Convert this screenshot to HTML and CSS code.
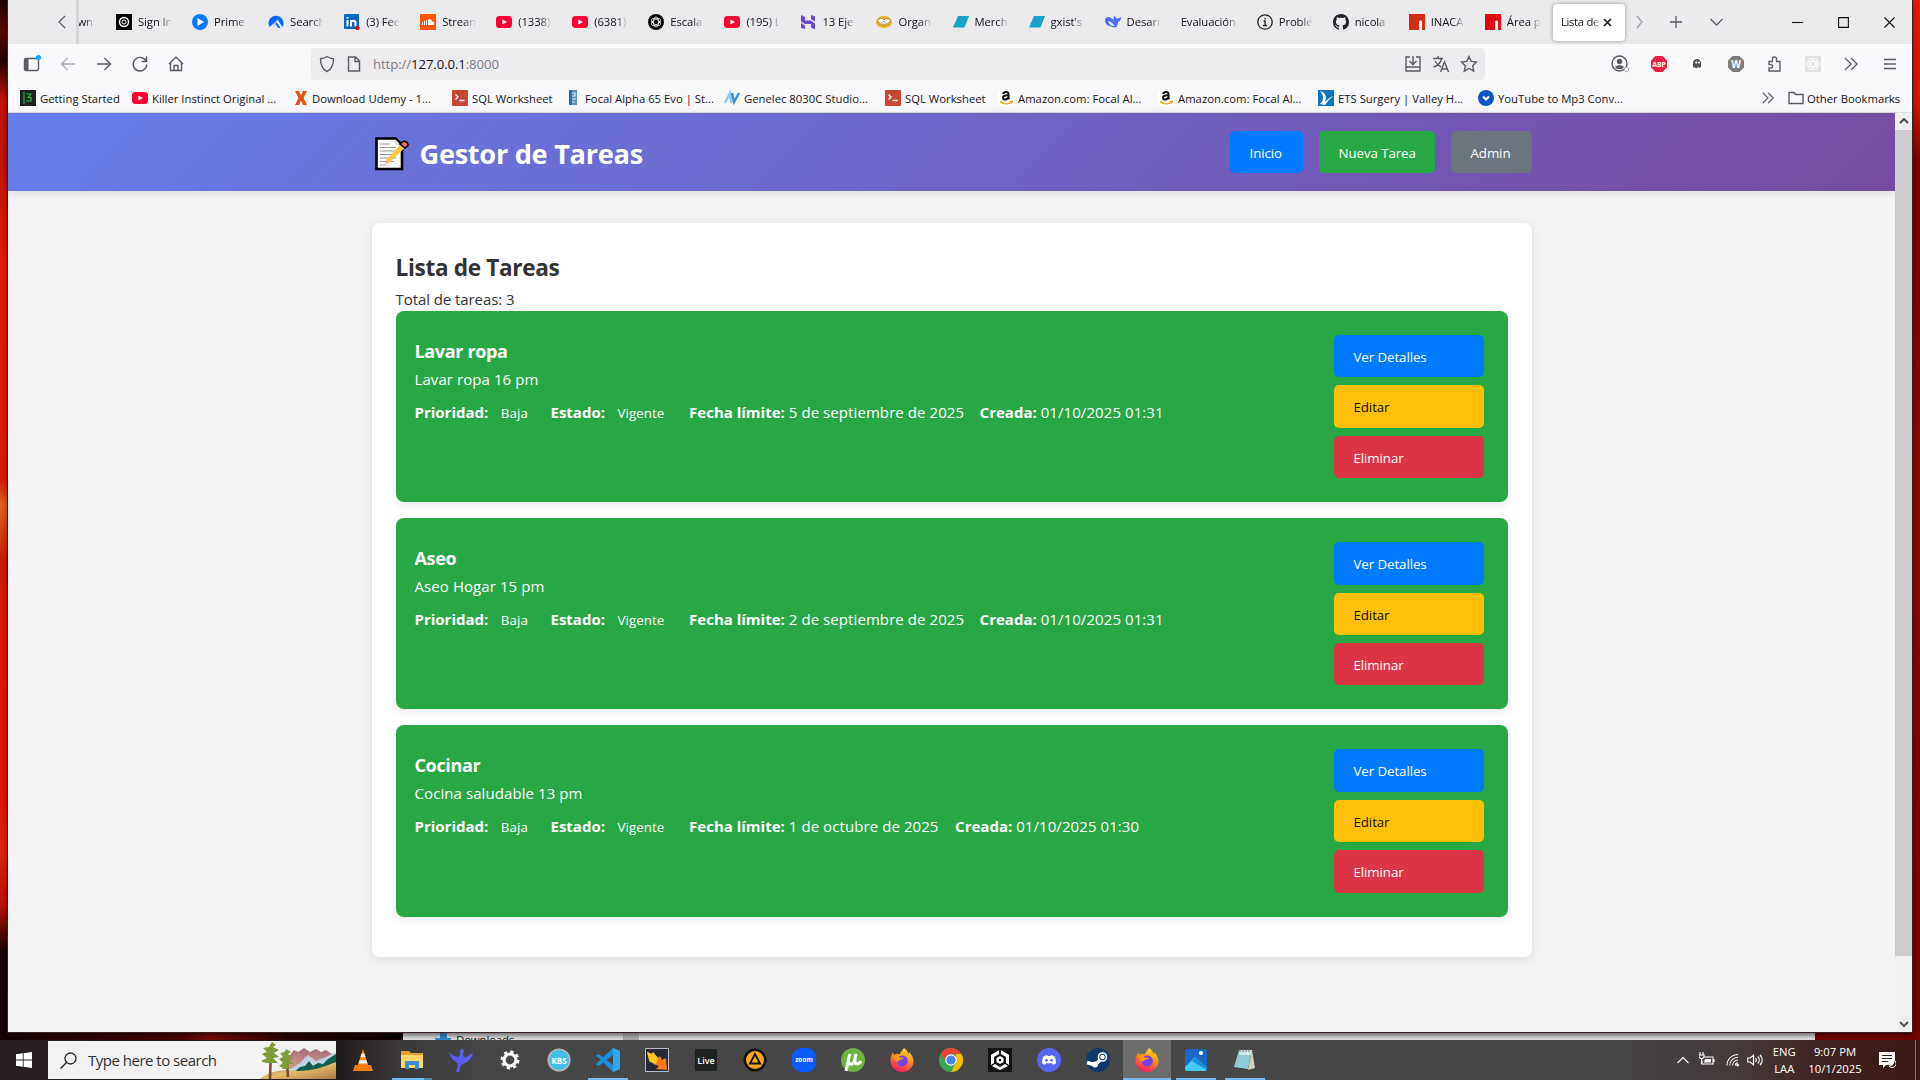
FILE: index.html
```html
<!DOCTYPE html>
<html lang="es">
<head>
<meta charset="utf-8">
<title>Lista de Tareas</title>
<link rel="stylesheet" href="styles.css">
</head>
<body>
<svg class="sprite" aria-hidden="true">
  <defs>
    <linearGradient id="flame" x1="0.7" y1="0" x2="0.3" y2="1"><stop offset="0" stop-color="#ffe226"/><stop offset=".45" stop-color="#ff8a1c"/><stop offset="1" stop-color="#f5156c"/></linearGradient>
    <linearGradient id="hill" x1="0" y1="0" x2="1" y2="1"><stop offset="0" stop-color="#8a6a4a"/><stop offset=".5" stop-color="#e2bd6c"/><stop offset="1" stop-color="#a8783f"/></linearGradient>
    <linearGradient id="peak" x1="0" y1="0" x2="0" y2="1"><stop offset="0" stop-color="#a06a78"/><stop offset="1" stop-color="#d9a090"/></linearGradient>
    <symbol id="youtube" viewBox="0 0 16 16"><rect y="2" width="16" height="12" rx="3.4" fill="#ff0033"/><path d="M6.3 5.4v5.2L11 8z" fill="#fff"/></symbol>
    <symbol id="sql" viewBox="0 0 16 16"><rect width="16" height="16" rx="1" fill="#c74634"/><path d="M3.5 4.5 6 7 3.500 9.500M7.500 10.500h5" stroke="#fff" stroke-width="1.300" fill="none"/></symbol>
    <symbol id="amazon" viewBox="0 0 16 16"><rect width="16" height="16" rx="3" fill="#fff"/><path d="M5.200 4.200C5.500 1.300 10.400 1.100 10.500 4v4l.9 1.200M10.200 5.200C6.500 5 4.800 6.200 5 8c.3 2.400 4.500 2 5.300-.8" fill="none" stroke="#111" stroke-width="2"/><path d="M2 11.500c3.700 3 8.300 3 11.300.7M11.600 11.400h2.600l-.7 2.200" fill="none" stroke="#f90" stroke-width="1.400"/></symbol>
    <symbol id="slant" viewBox="0 0 16 16"><path d="M5 2h11l-4.500 11.500H0z" fill="#17a2c6"/></symbol>
    <symbol id="firefox" viewBox="0 0 24 24"><path d="M14 0c3 2 4 4 4.200 6C19 5.500 19 4.500 19 4c3 3 4.600 6 4.500 9.500C23.300 19.600 18.500 24 12.300 24 5.700 24 .6 19.300.5 13 .4 9.500 1.500 6.500 3 4.500L4.500 7C6 5 8 5.500 9.500 6.500 10 5 12 3 14 0z" fill="url(#flame)"/><circle cx="12.300" cy="13" r="5.500" fill="#7542e5"/><path d="M3.500 8c3-1 5 0 6.500 2 2-1 3.500-.3 4 1-3-.3-4 .8-5.500 2C6 15 4 11 3.500 8z" fill="#ff9a20"/></symbol>
    <symbol id="dbl" viewBox="0 0 16 16"><path d="m2 2 6 6-6 6M8 2l6 6-6 6" fill="none" stroke="#5b5b66" stroke-width="1.300"/></symbol>
    <symbol id="inacap" viewBox="0 0 16 16"><path d="M0 0h16v16H0z" fill="currentColor"/><path d="M10 7c1.500-1 3-.5 3 1v8h-3z" fill="#fff"/></symbol>
  </defs>
</svg>
<div class="desktop">
  <div class="explorer">
    <svg width="18" height="10" viewBox="0 0 18 10"><path d="M6 0h7v6h5l-9 9-9-9h6z" fill="#2f86cf"/></svg>
    <span>Downloads</span><i class="explorer-bar"></i>
  </div>
  <div class="window">
    <div class="tabstrip">
      <div class="tab-scroll"><svg width="8" height="14" viewBox="0 0 8 14"><path d="M7 1 1 7l6 6" class="line"/></svg></div>
      <div class="tab-cut"><span>ownl</span></div>
      <div class="tab"><svg class="fav" viewBox="0 0 16 16"><path d="M0 0h16v16H0z"/><circle cx="8" cy="8" r="4.500" fill="none" stroke="#fff" stroke-width="1.500"/><circle cx="8" cy="8" r="2" fill="none" stroke="#fff"/></svg><span>Sign In</span></div>
      <div class="tab"><svg class="fav" viewBox="0 0 16 16"><circle cx="8" cy="8" r="8" fill="#0779ff"/><path d="M5.500 4v8L12 8z" fill="#fff"/></svg><span>Prime</span></div>
      <div class="tab"><svg class="fav" viewBox="0 0 16 16"><path d="M1.500 13A7.500 7.500 0 1 1 14.500 13L9.500 5.500 7.500 8z" fill="#0b66ff"/><path d="m8.500 8 4 6H10L7.500 10 5 13z" fill="#0b66ff"/></svg><span>Search</span></div>
      <div class="tab"><svg class="fav" viewBox="0 0 16 16"><rect width="15" height="15" rx="1" fill="#0a66c2"/><path d="M3.500 6v6.500M3.500 3v1.500M7 6v6.500M7 9c0-3 4.500-3 4.500 0v3.500" stroke="#fff" stroke-width="2" fill="none"/><circle cx="13.500" cy="14" r="2.200" fill="#d11124"/></svg><span>(3) Fee</span></div>
      <div class="tab"><svg class="fav" viewBox="0 0 16 16"><rect width="16" height="16" fill="#ff5500"/><path d="M2.500 8v3M4.500 7v4M6.500 6v5" stroke="#fff"/><path d="M8 5.500c2-1 4 .4 4 2 3-.5 3 3.500.5 3.500H8z" fill="#fff"/></svg><span>Stream</span></div>
      <div class="tab"><svg class="fav"><use href="#youtube"/></svg><span>(1338)</span></div>
      <div class="tab"><svg class="fav"><use href="#youtube"/></svg><span>(6381)</span></div>
      <div class="tab"><svg class="fav" viewBox="0 0 16 16"><circle cx="8" cy="8" r="8"/><g fill="none" stroke="#fff" stroke-width=".8"><ellipse cx="8" cy="8" rx="2.700" ry="5"/><ellipse cx="8" cy="8" rx="2.700" ry="5" transform="rotate(60 8 8)"/><ellipse cx="8" cy="8" rx="2.700" ry="5" transform="rotate(120 8 8)"/></g></svg><span>Escala</span></div>
      <div class="tab"><svg class="fav"><use href="#youtube"/></svg><span>(195) L</span></div>
      <div class="tab"><svg class="fav" viewBox="0 0 16 16"><path d="M1 1l4 2v3.500h6l4 3v6l-4-2V10H5L1 7.500zM11 1l4 1.500v5L11 5zM1 9l4 2.500V15l-4-1z" fill="#6a47d6"/></svg><span>13 Eje</span></div>
      <div class="tab"><svg class="fav" viewBox="0 0 16 16"><ellipse cx="8" cy="8" rx="8" ry="6" fill="#e5b51e"/><path d="M1 7c3-4 5-3 7-1 2-2 4-3 7 1l-5 4H6z" fill="#fff" stroke="#9a7714" stroke-width=".8"/><path d="m5 8 4 3m-2-4 4 3" stroke="#9a7714" stroke-width=".7"/></svg><span>Organ</span></div>
      <div class="tab"><svg class="fav"><use href="#slant"/></svg><span>Merch</span></div>
      <div class="tab"><svg class="fav"><use href="#slant"/></svg><span>gxist's</span></div>
      <div class="tab"><svg class="fav" viewBox="0 0 16 16"><path d="M0 6c0-3 4-4 6-2l3 2c-1-2 0-4 1-4l1 2c2 1 3 0 5-1 0 3-1 4-3 5 0 3-2 4-1 5-3 1-5 0-7-1C2 12 0 9 0 6z" fill="#4d6bfe"/><path d="M3 7c3 0 5 3 7 5-3 .5-6-1-7-5z" fill="#eaeaec"/></svg><span>Desarr</span></div>
      <div class="tab"><span class="wide">Evaluación</span></div>
      <div class="tab"><svg class="fav" viewBox="0 0 16 16"><circle cx="8" cy="8" r="7.200" class="dark"/><path d="M6.500 7H8v4.500M6 11.500h4M8 4v1.500" class="dark"/></svg><span>Proble</span></div>
      <div class="tab"><svg class="fav" viewBox="0 0 16 16"><path fill="#1f2328" d="M8 0c4.420 0 8 3.580 8 8a8.010 8.010 0 0 1-5.450 7.590c-.4.080-.55-.170-.55-.380 0-.270.010-1.130.010-2.200 0-.750-.250-1.230-.540-1.480 1.780-.200 3.650-.880 3.650-3.950 0-.880-.310-1.590-.820-2.150.080-.200.360-1.020-.080-2.120 0 0-.670-.220-2.200.820-.640-.180-1.320-.270-2-.270s-1.360.090-2 .270c-1.530-1.030-2.200-.820-2.200-.820-.440 1.100-.160 1.920-.080 2.120-.510.560-.820 1.280-.820 2.150 0 3.060 1.860 3.750 3.640 3.950-.230.200-.440.550-.510 1.070-.460.210-1.610.550-2.330-.660-.150-.240-.600-.830-1.230-.820-.670.010-.270.380.010.530.340.190.730.900.820 1.130.160.450.680 1.310 2.690.940 0 .670.010 1.300.010 1.490 0 .210-.150.450-.550.380A7.995 7.995 0 0 1 0 8c0-4.420 3.580-8 8-8Z"/></svg><span>nicola</span></div>
      <div class="tab"><svg class="fav orange"><use href="#inacap"/></svg><span>INACA</span></div>
      <div class="tab"><svg class="fav red"><use href="#inacap"/></svg><span>Área p</span></div>
      <div class="tab active"><span>Lista de</span><svg width="9" height="9" viewBox="0 0 9 9"><path d="m1 1 7 7m0-7L1 8" stroke="#15141a" stroke-width="1.600"/></svg></div>
      <div class="strip-tools">
        <svg width="7" height="14" viewBox="0 0 7 14" opacity=".5"><path d="m1 1 5 6-5 6" class="line"/></svg>
        <svg width="12" height="12" viewBox="0 0 12 12"><path d="M6 0v12M0 6h12" class="line"/></svg>
        <svg width="13" height="8" viewBox="0 0 13 8"><path d="m.5 1 6 6 6-6" class="line"/></svg>
      </div>
      <div class="win-buttons">
        <svg viewBox="0 0 11 11"><path d="M0 5.500h11" class="win"/></svg>
        <svg viewBox="0 0 11 11"><path d="M.6.6h9.800v9.800H.6z" class="win"/></svg>
        <svg viewBox="0 0 11 11"><path d="m.5.5 10 10m0-10-10 10" class="win"/></svg>
      </div>
    </div>

    <div class="navbar">
      <div class="nav-left">
        <svg viewBox="0 0 18 18"><rect x="1.500" y="3.500" width="14" height="12" rx="1.500" class="ico"/><path d="M2 4h3.500v11H2z" fill="#5b5b66"/><circle cx="15.500" cy="2.500" r="2.500" fill="#00aeff"/></svg>
        <svg viewBox="0 0 18 18" opacity=".45"><path d="M16 9H2.500M8.500 3 2.500 9l6 6" class="ico"/></svg>
        <svg viewBox="0 0 18 18"><path d="M2 9h13.500M9.500 3l6 6-6 6" class="ico"/></svg>
        <svg viewBox="0 0 18 18"><path d="M15 6A6.800 6.800 0 1 0 15.800 9.500M15.500 1.500V6.500H10.500" class="ico"/></svg>
        <svg viewBox="0 0 18 18"><path d="M2 9 9 2l7 7M3.500 8v7.500h11V8M7 15.500v-5h4v5" class="ico"/></svg>
      </div>
      <div class="urlbar">
        <svg viewBox="0 0 18 18"><path d="M9 1.500c2 1.500 4 2 6.500 2.200 0 6-1.500 10.300-6.500 12.800C4 14 2.500 9.700 2.500 3.700 5 3.500 7 3 9 1.500z" class="ico"/></svg>
        <svg viewBox="0 0 18 18"><path d="M3.500 2h7l4 4v10h-11zM10 2v4.500h4.500" class="ico"/></svg>
        <span class="url"><i>http://</i>127.0.0.1<i>:8000</i></span>
        <div class="url-actions">
          <svg viewBox="0 0 18 18"><path d="M6 2H2v10h14V2h-4M2 12v4h14v-4M9 1v8M5.500 6 9 9.500 12.500 6" class="ico"/></svg>
          <svg viewBox="0 0 18 18"><path d="M1 3.500h10M6 1v2.500M9.500 4C8.500 8 5 11 1.500 12M3 6c1.500 3 3 4.500 6 6M8.500 17l4-10 4 10M10 14h5" class="ico"/></svg>
          <svg viewBox="0 0 18 18"><path d="m9 1.500 2.300 4.900 5.200.7-3.800 3.700 1 5.300L9 13.500l-4.700 2.600 1-5.300L1.500 7.100l5.200-.7z" class="ico"/></svg>
        </div>
      </div>
      <div class="nav-right">
        <svg viewBox="0 0 18 18"><circle cx="8.500" cy="8.500" r="7.500" class="ico"/><circle cx="8.500" cy="6.500" r="2.700" fill="#5b5b66"/><path d="M4 12c2-2.500 7-2.500 9 0l-2 2H6z" fill="#5b5b66"/><circle cx="15.500" cy="14.500" r="2.200" fill="#f9f9fb" stroke="#aaa"/></svg>
        <svg viewBox="0 0 18 18"><path d="M5.500 1h7L17 5.500v7L12.500 17h-7L1 12.500v-7z" fill="#ed1e45"/><text x="9" y="11.800" class="abp">ABP</text></svg>
        <svg viewBox="0 0 18 18"><circle cx="9" cy="9" r="7" fill="#fff"/><path d="M5 12.500V8c0-5.500 8-5.500 8 0v4l-1.500 1-1.500-1-1.500 1.500L7 12.500z" fill="#555"/><circle cx="8.200" cy="7.500" r="1" fill="#fff"/><circle cx="11" cy="7.500" r="1" fill="#fff"/></svg>
        <svg viewBox="0 0 18 18"><path d="M5.500 1h7L17 5.500v7L12.500 17h-7L1 12.500v-7z" fill="#7d7d7d"/><text x="9" y="12.800" class="letter">W</text></svg>
        <svg viewBox="0 0 18 18"><path d="M4 6.500h3.500V4a2 2 0 0 1 4 0v2.500H15V16H4v-3h2a1.700 1.700 0 0 0 0-3.400H4z" class="ico"/></svg>
        <svg viewBox="0 0 18 18"><rect x="1" y="1" width="16" height="16" fill="#e3e3e5"/><g fill="none" stroke="#fff"><ellipse cx="9" cy="9" rx="6.500" ry="2.500"/><ellipse cx="9" cy="9" rx="6.500" ry="2.500" transform="rotate(60 9 9)"/><ellipse cx="9" cy="9" rx="6.500" ry="2.500" transform="rotate(120 9 9)"/></g></svg>
        <svg viewBox="-1 -1 18 18"><use href="#dbl" width="16" height="16"/></svg>
        <svg viewBox="0 0 18 18"><path d="M3 4.500h12M3 9h12M3 13.500h12" class="ico"/></svg>
      </div>
    </div>

    <div class="bookmarks">
      <div class="bm b1"><svg class="fav" viewBox="0 0 16 16"><path d="M0 0h16v16H0z" fill="#222"/><path d="M4 2v12M6 4h5L8 7.500h3V11H6" stroke="#19c748" fill="none" stroke-width="1.100"/></svg><span>Getting Started</span></div>
      <div class="bm b2"><svg class="fav"><use href="#youtube"/></svg><span>Killer Instinct Original ...</span></div>
      <div class="bm b3"><svg class="fav narrow" viewBox="0 0 12 14"><path d="M0 0h4l2 4.500L8 0h4L8.500 7l3.500 7H8L6 9.500 4 14H0l3.500-7z" fill="#e8501c"/></svg><span>Download Udemy - 1...</span></div>
      <div class="bm b4"><svg class="fav"><use href="#sql"/></svg><span>SQL Worksheet</span></div>
      <div class="bm b5"><svg class="fav slim" viewBox="0 0 8 15"><path d="M0 0h8v15H0z" fill="#5b93c0"/><path d="M0 0h3v15H0z" fill="#2d6da3"/><path d="M3 3h3v3H3M3 9h4M3 12h3" stroke="#dcebf5" stroke-width="1.200" fill="none"/></svg><span>Focal Alpha 65 Evo | St...</span></div>
      <div class="bm b6"><svg class="fav" viewBox="0 0 16 16"><path d="m1 13 5-10 1.500 10" stroke="#8ccbf2" stroke-width="2.400" fill="none"/><path d="m8 3 2 9 5-9" stroke="#3f8ede" stroke-width="2.400" fill="none"/></svg><span>Genelec 8030C Studio...</span></div>
      <div class="bm b7"><svg class="fav"><use href="#sql"/></svg><span>SQL Worksheet</span></div>
      <div class="bm b8"><svg class="fav"><use href="#amazon"/></svg><span>Amazon.com: Focal Al...</span></div>
      <div class="bm b9"><svg class="fav"><use href="#amazon"/></svg><span>Amazon.com: Focal Al...</span></div>
      <div class="bm b10"><svg class="fav" viewBox="0 0 16 16"><path d="M0 0h16v16H0z" fill="#0b76bd"/><path d="M2 1c6 2 7 6 5 11 3-3 5-5 9-6-4 2-6 5-9 9L2 14c4-4 4-8 0-13z" fill="#fff"/></svg><span>ETS Surgery | Valley H...</span></div>
      <div class="bm b11"><svg class="fav" viewBox="0 0 16 16"><circle cx="8" cy="8" r="8" fill="#0b57c4"/><path d="m5 6.500 3 3 3-3" stroke="#fff" stroke-width="2" fill="none"/></svg><span>YouTube to Mp3 Conv...</span></div>
      <div class="bm-end">
        <svg width="14" height="14" viewBox="0 0 16 16"><use href="#dbl"/></svg>
        <svg width="16" height="14" viewBox="0 0 16 14"><path d="M1 12.500v-11h5l1.500 2H15v9z" class="ico"/></svg>
        <span>Other Bookmarks</span>
      </div>
    </div>

    <div class="viewport">
      <div class="page">
        <header class="site-header">
          <div class="container header-row">
            <h1><svg class="memo" viewBox="0 0 34 34"><path d="M1.500 1.500h19l6.500 6v24.500H1.500z" fill="#fff" stroke="#000" stroke-width="2.600"/><path d="M20 2v6h6" fill="#ddd"/><path d="M5 7h10M5 10.500h16M5 14h16M5 17.500h16M5 21h16M5 24.500h14M5 28h6" stroke="#999" stroke-width="1.200"/><path d="m10 27 2-5L28 4.500c2-2 6 1 4 4L15 25z" fill="#ffc83d"/><path d="M27 5.500c2-3 7.500.5 5.500 3.500L30 11l-5-4z" fill="#f4707a" stroke="#000" stroke-width="1.600"/><path d="m10 27 2-5 3 3z" fill="#e8b08c"/></svg><span>Gestor de Tareas</span></h1>
            <nav class="site-nav">
              <a class="btn primary w-inicio">Inicio</a>
              <a class="btn success w-nueva">Nueva Tarea</a>
              <a class="btn secondary w-admin">Admin</a>
            </nav>
          </div>
        </header>
        <main class="container panel">
          <h2>Lista de Tareas</h2>
          <p class="total">Total de tareas: 3</p>
          <article class="task">
            <div class="task-info">
              <h3>Lavar ropa</h3>
              <p class="desc">Lavar ropa 16 pm</p>
              <div class="meta">
                <div class="m-prio"><b>Prioridad:</b><span class="badge">Baja</span></div>
                <div class="m-state"><b>Estado:</b><span class="badge">Vigente</span></div>
                <div class="m-date"><b>Fecha límite:</b> <span>5 de septiembre de 2025</span></div>
                <div class="m-new"><b>Creada:</b> <span>01/10/2025 01:31</span></div>
              </div>
            </div>
            <div class="actions"><a class="btn primary">Ver Detalles</a><a class="btn warning">Editar</a><a class="btn danger">Eliminar</a></div>
          </article>
          <article class="task">
            <div class="task-info">
              <h3>Aseo</h3>
              <p class="desc">Aseo Hogar 15 pm</p>
              <div class="meta">
                <div class="m-prio"><b>Prioridad:</b><span class="badge">Baja</span></div>
                <div class="m-state"><b>Estado:</b><span class="badge">Vigente</span></div>
                <div class="m-date"><b>Fecha límite:</b> <span>2 de septiembre de 2025</span></div>
                <div class="m-new"><b>Creada:</b> <span>01/10/2025 01:31</span></div>
              </div>
            </div>
            <div class="actions"><a class="btn primary">Ver Detalles</a><a class="btn warning">Editar</a><a class="btn danger">Eliminar</a></div>
          </article>
          <article class="task">
            <div class="task-info">
              <h3>Cocinar</h3>
              <p class="desc">Cocina saludable 13 pm</p>
              <div class="meta">
                <div class="m-prio"><b>Prioridad:</b><span class="badge">Baja</span></div>
                <div class="m-state"><b>Estado:</b><span class="badge">Vigente</span></div>
                <div class="m-date short"><b>Fecha límite:</b> <span>1 de octubre de 2025</span></div>
                <div class="m-new"><b>Creada:</b> <span>01/10/2025 01:30</span></div>
              </div>
            </div>
            <div class="actions"><a class="btn primary">Ver Detalles</a><a class="btn warning">Editar</a><a class="btn danger">Eliminar</a></div>
          </article>
        </main>
      </div>
      <div class="scrollbar">
        <svg width="10" height="6" viewBox="0 0 10 6"><path d="m1 5 4-4 4 4" stroke="#505050" stroke-width="2" fill="none"/></svg>
        <div class="track"><div class="thumb"></div></div>
        <svg width="10" height="6" viewBox="0 0 10 6"><path d="m1 1 4 4 4-4" stroke="#505050" stroke-width="2" fill="none"/></svg>
      </div>
    </div>
  </div>

  <div class="taskbar">
    <div class="start"><svg width="16" height="16" viewBox="0 0 16 16"><path d="M0 2.300 6.800 1.300v6.300H0zM7.600 1.200 16 0v7.600H7.600zM0 8.400h6.800v6.300L0 13.700zM7.600 8.400H16V16l-8.400-1.200z" fill="#fff"/></svg></div>
    <div class="search">
      <svg width="17" height="17" viewBox="0 0 17 17"><circle cx="10.500" cy="6.500" r="5.500" fill="none" stroke="#222" stroke-width="1.300"/><path d="m6.500 10.500-6 6" stroke="#222" stroke-width="1.400"/></svg>
      <span>Type here to search</span>
      <svg class="scene" viewBox="0 0 76 38"><path d="M22 24 34 9l4 2 6-4 6 4 6-3 5 3 5-2 10 7v12H22z" fill="url(#peak)"/><path d="M28 30 40 22l8-8 8 6 10-4 10-5v20H28z" fill="#c3d2e2"/><path d="m34 31 6-5 5-1 4-5 4 5 5-3 5 1 5-5 8-5v13l-18 6H34z" fill="#115d4c"/><path d="M0 38c10-8 22-10 38-8 14 0 26-4 38-9v17z" fill="url(#hill)"/><path d="M11 6 10 38M26 10l2 26" stroke="#7a4a35" stroke-width="2.600"/><path d="M12 1l4 3-3 2 6 3-5 3 5 4-6 1 5 5H6l-5-2 6-3-5-4 5-2-4-4 6-1zM26 8l5 3-3 2 5 4-4 2 5 4h-7l4 4-6 1-6-3 4-3-4-4 4-2-3-4 5-1z" fill="#7f9b3c"/></svg>
    </div>
    <div class="apps">
      <div class="app"><svg viewBox="0 0 24 24"><path d="M12 1 17 17H7z" fill="#ff8a0d"/><path d="M10.600 5.500h2.800l1.200 3.700H9.300zM8.500 12.200h7l1.100 3.400H7.400z" fill="#eee"/><path d="M4 17h16l2 6H2z" fill="#f57c00"/></svg></div>
      <div class="app multi"><svg viewBox="0 0 24 24"><path d="M1 3h8l2 2h12v15H1z" fill="#e0a62c"/><path d="M1 7h22v13H1z" fill="#ffd768"/><path d="M5 21v-8h14v8h-4v-4H9v4z" fill="#3a8fd8"/></svg></div>
      <div class="app"><svg viewBox="0 0 24 24"><path d="M11 2c2-2 4-1 4 1l-1 4 1 2c3 0 6-2 9-5-1 6-4 9-8 11l-4 2-2 7-3 0 2-7-2-3C4 12 1 9 0 3c2 4 5 5 9 6l2-2z" fill="#5a5cf0"/></svg></div>
      <div class="app"><svg viewBox="0 0 24 24"><circle cx="12" cy="12" r="6" fill="none" stroke="#fff" stroke-width="3.200"/><circle cx="12" cy="12" r="8" fill="none" stroke="#fff" stroke-width="3" stroke-dasharray="3.140 3.140"/></svg></div>
      <div class="app"><svg viewBox="0 0 24 24"><circle cx="12" cy="12" r="10.800" fill="#45bfe8" stroke="#b4b4b4" stroke-width="1.600"/><text x="12" y="15.500" class="kbs">KBS</text></svg></div>
      <div class="app open"><svg viewBox="0 0 24 24"><path d="M17 0 24 3v18l-7 3L2.500 9.500 0 8l2-2 3 1.500L17 17V7L5 16.500 2 18l-2-2z" fill="#1b8fdb"/><path d="M17 0l7 3v18l-7 3z" fill="#2ea7f5"/></svg></div>
      <div class="app"><svg viewBox="0 0 24 24"><path d="M.5.5h23v23H.5z" fill="#252a38" stroke="#bbc"/><path d="m2 4 5 2 1-2 5 6 2-2 2 4 4-2 1 12-11-1 3-3-6-2 1-2-5-1z" fill="#ff7a16"/><path d="m2 4 5 2 1-2 5 6-2 6-6-2z" fill="#ffc91f"/></svg></div>
      <div class="app"><svg viewBox="0 0 24 24"><rect x="1" y="1" width="22" height="22" rx="1" fill="#202323"/><text x="12" y="15.500" class="live">Live</text></svg></div>
      <div class="app"><svg viewBox="0 0 24 24"><circle cx="12" cy="12" r="11.500" fill="#111"/><circle cx="12" cy="12" r="9" fill="#f9a61c"/><path d="m12 6 5 9.500H7z" fill="none" stroke="#111" stroke-width="1.800"/></svg></div>
      <div class="app"><svg viewBox="0 0 24 24"><rect width="24" height="24" rx="9" fill="#0b5cff"/><text x="12" y="14" class="zoom">zoom</text></svg></div>
      <div class="app"><svg viewBox="0 0 24 24"><circle cx="12" cy="12" r="12" fill="#6cb33f"/><path d="M9 6c-2 5-3 9 0 10 4 1 5-4 6-10-2 6-1 10 1 10 2 0 3-1 4-3M8 10 5 23" fill="none" stroke="#fff" stroke-width="3"/></svg></div>
      <div class="app"><svg><use href="#firefox"/></svg></div>
      <div class="app"><svg viewBox="0 0 24 24"><circle cx="12" cy="12" r="12" fill="#34a853"/><path d="M22.400 6A12 12 0 0 1 12 24l5-9V6z" fill="#fbbc05"/><path d="M1.600 6A12 12 0 0 1 22.400 6H12l-5 8z" fill="#ea4335"/><circle cx="12" cy="12" r="5.800" fill="#fff"/><circle cx="12" cy="12" r="4.600" fill="#4285f4"/></svg></div>
      <div class="app"><svg viewBox="0 0 24 24"><path d="M0 0h24v24H0z" fill="#141414"/><path d="M11 2v4L6 9v6l-3 2V7zM13 2v4l5 3v6l3 2V7zM12 22l-8-4 3-2 5 3 5-3 3 2z" fill="#fff"/><path d="m12 8 3.500 2v4L12 16l-3.500-2v-4z" fill="#fff"/><circle cx="12" cy="12" r="1.300" fill="#141414"/></svg></div>
      <div class="app"><svg viewBox="0 0 24 24"><circle cx="12" cy="12" r="12" fill="#5865f2"/><path d="M5 15c0-3 1-6 2-7l3-1 .6 1h2.800l.6-1 3 1c1 1 2 4 2 7-1 1.200-2 1.500-3 1.700l-1-1.500H9l-1 1.500c-1-.2-2-.5-3-1.700z" fill="#fff"/><circle cx="9.500" cy="12.300" r="1.400" fill="#5865f2"/><circle cx="14.500" cy="12.300" r="1.400" fill="#5865f2"/></svg></div>
      <div class="app"><svg viewBox="0 0 24 24"><circle cx="12" cy="12" r="12" fill="#10396b"/><path d="M1 14.500 9 17l6-6" stroke="#fff" stroke-width="3.500" fill="none"/><circle cx="16.500" cy="9" r="4" fill="#10396b" stroke="#fff" stroke-width="1.600"/><circle cx="16.500" cy="9" r="2.300" fill="#fff"/><circle cx="9" cy="16.500" r="3" fill="#fff"/></svg></div>
      <div class="app active-app"><svg><use href="#firefox"/></svg></div>
      <div class="app open"><svg viewBox="0 0 24 24"><rect x="1" y="1" width="22" height="22" rx="3" fill="#1c66c8"/><path d="M1 19 11 9l12 11v1c0 1-1 2-2 2H3c-1 0-2-1-2-2z" fill="#45c8f2"/><path d="m11 9 12 11v2L8 13z" fill="#1490df"/><circle cx="17" cy="5" r="2" fill="#fff"/></svg></div>
      <div class="app open"><svg viewBox="0 0 24 24"><path d="M6 2h13l-4 19-14-2z" fill="#8fcbd6"/><path d="M7 2h12l-1 5H6z" fill="#d9e4e4"/><path d="m19 2 3 18-7 2z" fill="#d2d2c0"/><path d="M7 1v3M10 1v3M13 1v3M16 1v3" stroke="#667"/></svg></div>
    </div>
    <div class="tray">
      <svg class="t-chev" viewBox="0 0 12 8"><path d="m.5 7 5.500-5.500L11.500 7" class="tray-line"/></svg>
      <svg class="t-batt" viewBox="0 0 16 16"><path d="M5 5h9v7H3V8M15 7v3M1 0v3M4 0v3M0 3h5v2L3.500 6.500h-2L0 5zM2.500 6v6" class="tray-line"/><path d="M6 7h6v3.500H5z" fill="#fff"/></svg>
      <svg class="t-wifi" viewBox="0 0 14 14"><g class="tray-line"><path d="M10 13a3 3 0 0 1 3-3M7 13a6 6 0 0 1 6-6M4 13a9 9 0 0 1 9-9M1 13A12 12 0 0 1 13 1"/></g><circle cx="12.500" cy="12.500" r="1.500" fill="#fff"/></svg>
      <svg class="t-vol" viewBox="0 0 16 14"><path d="M.7 5v4h2.500L6.500 12V2L3.200 5zM8.500 5c1 1.200 1 2.800 0 4M10.800 3.500c2 2 2 5 0 7M13 2c3 3 3 7 0 10" class="tray-line"/></svg>
      <div class="lang"><span>ENG</span><span>LAA</span></div>
      <div class="clock"><span>9:07 PM</span><span>10/1/2025</span></div>
      <svg class="t-note" viewBox="0 0 17 17"><path d="M0 0h16v11l-2 2H7l-3 3v-3H0z" fill="#fff"/><path d="M3 3.500h10M3 6.500h10M3 9.500h6" stroke="#3c1c1c" stroke-width="1.200"/><path d="M15 8a4 4 0 1 1-5 6c3 0 5-2 5-6z" fill="#3c1c1c" stroke="#fff"/></svg>
      <i class="peek"></i>
    </div>
  </div>
</div>
</body>
</html>
```
FILE: styles.css
```css
* { box-sizing: border-box; }
body { margin: 0; font-family: "Open Sans", "Noto Sans", sans-serif; }
h1, h2, h3, p { margin: 0; }
svg { flex: none; display: block; }
.sprite { position: absolute; width: 0; height: 0; }

.desktop {
  position: relative; width: 1920px; height: 1080px; overflow: hidden;
  background:
    linear-gradient(180deg, #ef1a04 0, #d51402 100px, #780300 160px, #8c0800 500px, #720300 1080px) right / 12px 100% no-repeat,
    linear-gradient(180deg, #180405 0, #5c0a06 30px, #200405 60px, #c51204 100px, #c01404 150px, #e21c06 260px, #dc1c04 480px, #e06018 505px, #cf1e04 560px, #e21a08 640px, #dd1602 800px, #e02808 850px, #c01006 905px, #160204 950px, #120104 1020px) left / 12px 100% no-repeat,
    linear-gradient(90deg, #120104 0, #4a0606 180px, #780c0a 210px, #250203 290px, #0c0001 403px, #720300 1815px);
}

.explorer {
  position: absolute; left: 403px; top: 1032px; width: 1412px; height: 8px; overflow: hidden;
  background: linear-gradient(#b8b9b8, #e2e3e2);
  display: flex; padding-left: 31px; gap: 4px; font-size: 11.500px; color: #222;
}
.explorer span { line-height: 15px; letter-spacing: -.200px; }
.explorer-bar { width: 16px; margin-left: 105px; background: #aaa; }

.window {
  position: absolute; left: 8px; top: 0; width: 1904px; height: 1032px;
  display: flex; flex-direction: column; background: #f9f9fb;
  box-shadow: 0 0 0 1px #3c2020, 0 2px 6px rgba(0,0,0,.6);
}

.tabstrip { height: 44px; background: #eaeaec; display: flex; align-items: center; font-size: 11.300px; color: #15141a; }
.line { fill: none; stroke: #5b5b66; stroke-width: 1.300; }
.dark { fill: none; stroke: #222; stroke-width: 1.300; }
.win { fill: none; stroke: #111; stroke-width: 1.100; }
.tab-scroll { width: 68px; padding-left: 50px; }
.tab-cut { width: 32px; height: 44px; border-left: 3px solid #d4d4d7; overflow: hidden; display: flex; align-items: center; }
.tab-cut span { width: 17px; overflow: hidden; margin-left: -2px; text-indent: -6px; line-height: 20px; letter-spacing: -.300px; mask-image: linear-gradient(90deg, #000 50%, transparent); }
.tab { width: 76.050px; flex: none; padding-left: 8px; display: flex; align-items: center; gap: 6px; }
.tab span { width: 34px; overflow: hidden; white-space: nowrap; line-height: 20px; letter-spacing: -.100px; mask-image: linear-gradient(90deg, #000 65%, transparent); }
.tab span.wide { width: 57px; mask-image: linear-gradient(90deg, #000 80%, transparent); }
.fav { width: 16px; height: 16px; flex: none; margin-top: -1px; }
.orange { color: #d42e12; }
.red { color: #e30613; }
.tab.active { width: 72px; height: 37px; background: #fff; border-radius: 4px; box-shadow: 0 0 4px rgba(0,0,0,.35); gap: 1.500px; }
.tab.active span { width: 41px; letter-spacing: -.300px; mask-image: linear-gradient(90deg, #000 75%, transparent); }
.strip-tools { display: flex; align-items: center; gap: 27px; padding-left: 11px; }
.strip-tools svg:nth-child(3) { margin-left: 1px; }
.win-buttons { margin-left: auto; display: flex; gap: 35px; padding-right: 17px; }
.win-buttons svg { width: 11px; height: 11px; }

.navbar { height: 40px; padding-top: 4px; display: flex; align-items: flex-start; }
.navbar svg { width: 18px; height: 18px; }
.ico { fill: none; stroke: #5b5b66; stroke-width: 1.400; }
.nav-left { width: 303px; height: 32px; padding-left: 15px; display: flex; align-items: center; gap: 17.900px; }
.urlbar { width: 1174px; height: 32px; background: #ececee; border-radius: 4px; padding: 0 7px; display: flex; align-items: center; gap: 9px; }
.url { font-size: 13.200px; color: #15141a; padding-left: 1px; letter-spacing: -.100px; }
.url i { font-style: normal; color: #7b7b84; }
.url-actions { margin-left: auto; display: flex; gap: 10px; }
.nav-right { height: 32px; padding-left: 126px; display: flex; align-items: center; gap: 20.500px; }
.abp { font: bold 6.800px "Open Sans", sans-serif; fill: #fff; text-anchor: middle; }
.letter { font: bold 10px "Open Sans", sans-serif; fill: #fff; text-anchor: middle; }

.bookmarks { height: 29px; padding-left: 12px; display: flex; align-items: center; border-bottom: 1px solid #dcdce0; font-size: 11.300px; color: #15141a; white-space: nowrap; }
.bm { display: flex; align-items: center; gap: 4px; flex: none; }
.narrow { width: 12px; height: 14px; margin: 0 1px 0 1px; }
.slim { width: 8px; height: 15px; margin-right: 4px; }
.b1 { width: 112px; }
.b2 { width: 162px; }
.b3 { width: 158px; }
.b4 { width: 117px; }
.b5 { width: 155px; }
.b6 { width: 161px; }
.b7 { width: 113px; }
.b8 { width: 160px; }
.b9 { width: 160px; }
.b10 { width: 160px; }
.b11 { width: 283px; }
.bm-end { display: flex; align-items: center; }
.bm-end svg:nth-child(2) { margin: 0 3px 0 13px; }

.viewport { flex: 1; display: flex; min-height: 0; }
.page { flex: 1; background: #f3f3f3; font-size: 15px; line-height: 25.600px; color: #333; }
.site-header { height: 78px; background: linear-gradient(135deg, #667eea 0%, #764ba2 100%); box-shadow: 0 2px 10px rgba(0,0,0,.1); }
.container { width: 1160px; margin: 0 auto; }
.header-row { height: 78px; display: flex; align-items: center; justify-content: space-between; }
h1 { display: flex; align-items: center; gap: 11px; padding-top: 3px; color: #fff; font-size: 27.200px; line-height: 46px; letter-spacing: -.300px; white-space: nowrap; }
.memo { width: 34px; height: 34px; margin-left: 3px; }
.site-nav { display: flex; gap: 16px; }
.btn { display: block; height: 42.400px; padding: 1px 20px 0; border-radius: 5px; color: #fff; font-size: 13.300px; line-height: 42.400px; letter-spacing: -.080px; white-space: nowrap; }
.w-inicio { width: 73px; }
.w-nueva { width: 116px; }
.w-admin { width: 81px; }
.primary { background: #007bff; }
.success { background: #28a745; }
.secondary { background: #6c757d; }
.warning { background: #ffc107; color: #111; }
.danger { background: #dc3545; }

.panel { margin-top: 32px; padding: 24px; background: #fff; border-radius: 8px; box-shadow: 0 2px 10px rgba(0,0,0,.1); }
h2 { padding-top: 4px; font-size: 22.600px; line-height: 34.400px; letter-spacing: -.330px; }
.total { padding-top: 2.600px; line-height: 23px; letter-spacing: -.070px; }
.task { height: 191.200px; margin-bottom: 16px; padding: 24px 24px 24px 19px; background: #28a745; border-radius: 8px; box-shadow: 0 2px 10px rgba(0,0,0,.1); color: #fff; display: flex; justify-content: space-between; }
h3 { padding-top: 2px; font-size: 18px; line-height: 28.700px; letter-spacing: -.350px; }
.desc { padding-top: 1px; line-height: 24.600px; letter-spacing: .080px; }
.meta { display: flex; gap: 16px; margin-top: 8px; padding-top: .600px; white-space: nowrap; }
.meta span { letter-spacing: .080px; }
.badge { padding: 0 8px; margin-left: 4.500px; font-size: 13.300px; }
.m-prio { width: 120px; }
.m-state { width: 122.600px; }
.m-date { width: 274.500px; }
.m-date.short { width: 250px; }
.actions { width: 150px; display: flex; flex-direction: column; gap: 8px; }

.scrollbar { width: 17px; background: #f0f0f0; display: flex; flex-direction: column; align-items: center; padding: 5px 0; }
.track { width: 17px; flex: 1; padding-top: 6px; }
.thumb { height: 826px; background: #cdcdcd; }

.taskbar {
  position: absolute; left: 0; top: 1040px; width: 1920px; height: 40px; display: flex;
  background: linear-gradient(90deg, #281f20 0, #231c1d 340px, #3a3838 400px, #464646 480px, #474747 1600px, #443a3a 1740px, #3e1f1e 1840px, #3b1a19 1920px);
}
.start { width: 48px; display: grid; place-items: center; }
.search { width: 288px; margin: 1px 0; background: #f2f2f2; display: flex; align-items: center; padding-left: 12px; font-size: 15px; color: #333; }
.search span { margin-left: 11px; width: 171px; white-space: nowrap; letter-spacing: -.500px; }
.scene { width: 76px; height: 38px; margin-left: 1px; }
.apps { display: flex; gap: 1px; padding-left: 3px; }
.app { width: 48px; height: 40px; display: grid; place-items: center; }
.app svg { width: 24px; height: 24px; }
.open { background: linear-gradient(#76b9ed, #76b9ed) bottom / 40px 2px no-repeat; }
.multi { background: linear-gradient(90deg, #76b9ed 32px, #5584a8 32px) bottom / 40px 2px no-repeat; }
.active-app { background: linear-gradient(#76b9ed, #76b9ed) bottom / 100% 2px no-repeat, #6d6d6d; }
.kbs { font: bold 8px "Open Sans", sans-serif; fill: #fff; text-anchor: middle; }
.live { font: 600 9px "Open Sans", sans-serif; fill: #fff; text-anchor: middle; }
.zoom { font: bold 6.500px "Open Sans", sans-serif; fill: #fff; text-anchor: middle; }
.tray { margin-left: auto; display: flex; align-items: center; color: #fff; font-size: 11.300px; line-height: 17px; }
.tray-line { fill: none; stroke: #fff; stroke-width: 1.100; }
.t-chev { width: 12px; height: 8px; margin-right: 10px; }
.t-batt { width: 16px; height: 16px; margin-right: 11px; }
.t-wifi { width: 13px; height: 14px; margin-right: 8px; }
.t-vol { width: 16px; height: 14px; }
.lang { width: 43.500px; display: flex; flex-direction: column; align-items: center; }
.clock { width: 54px; display: flex; flex-direction: column; align-items: center; margin: 0 17px 0 2px; }
.t-note { width: 17px; height: 17px; }
.peek { width: 1px; height: 40px; background: #8a7474; margin: 0 4px 0 19px; }
```
